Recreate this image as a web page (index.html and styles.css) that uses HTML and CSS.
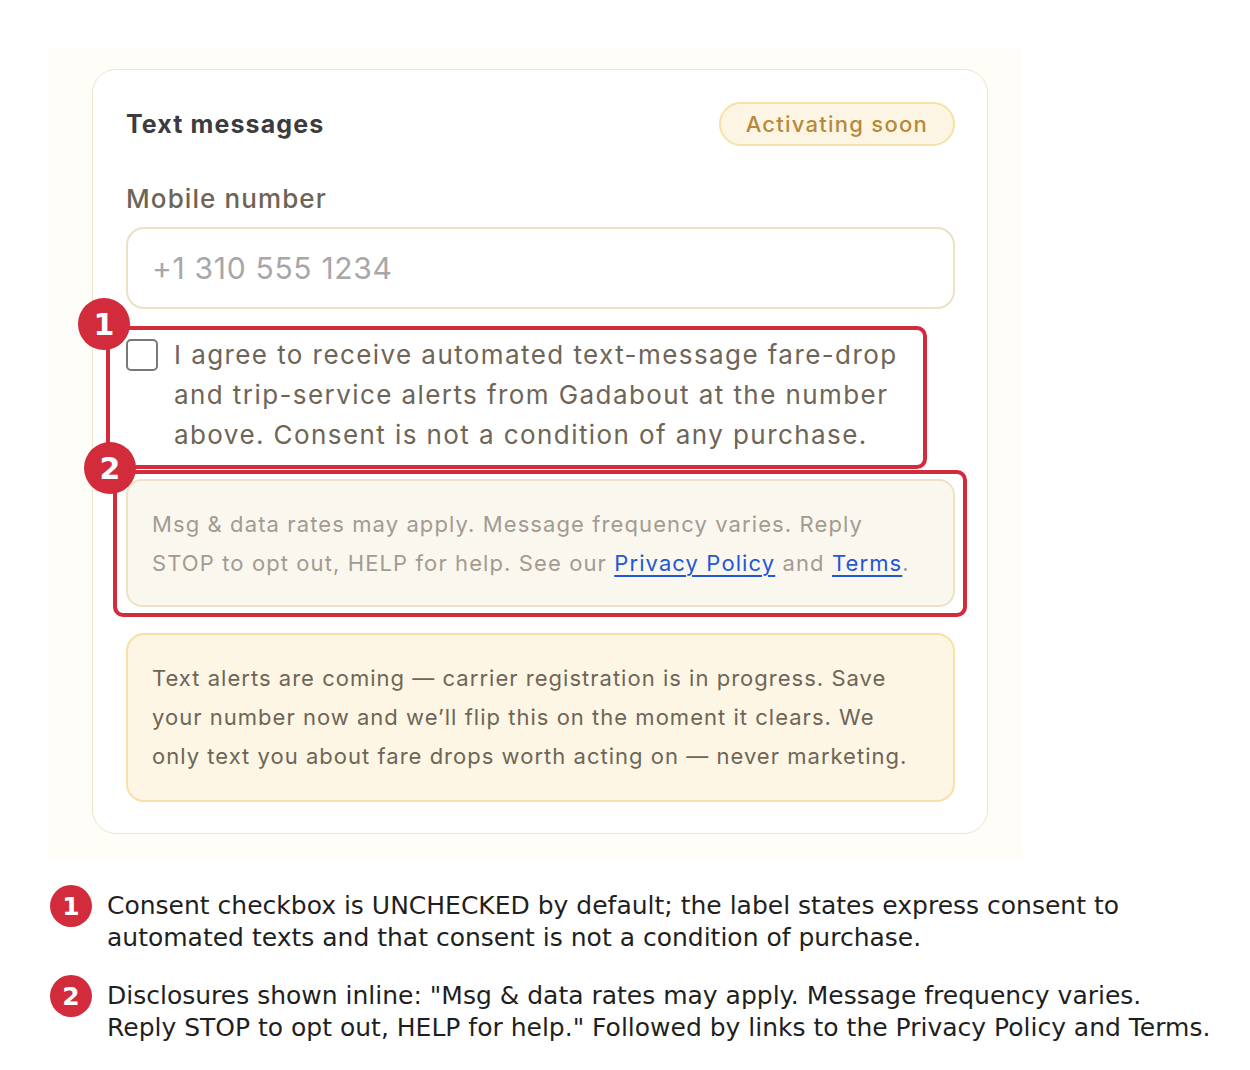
FILE: index.html
```html
<!DOCTYPE html>
<html lang="en">
<head>
<meta charset="utf-8">
<title>Text messages</title>
<link rel="stylesheet" href="styles.css">
</head>
<body>
<div class="stage">
  <div class="panel">
    <section class="card">
      <header class="card-head">
        <h2 class="title">Text messages</h2>
        <span class="badge">Activating soon</span>
      </header>
      <label class="field-label" for="phone">Mobile number</label>
      <input class="phone" id="phone" type="tel" placeholder="+1 310 555 1234">
      <div class="consent">
        <span class="checkbox"></span>
        <p class="consent-text">I agree to receive automated text-message fare-drop<br>and trip-service alerts from Gadabout at the number<br>above. Consent is not a condition of any purchase.</p>
      </div>
      <div class="disclosure">
        <p>Msg &amp; data rates may apply. Message frequency varies. Reply<br>STOP to opt out, HELP for help. See our <a href="#">Privacy Policy</a> and <a href="#">Terms</a>.</p>
      </div>
      <div class="notice">
        <p>Text alerts are coming — carrier registration is in progress. Save<br>your number now and we’ll flip this on the moment it clears. We<br>only text you about fare drops worth acting on — never marketing.</p>
      </div>
    </section>
  </div>

  <div class="mark mark-1"></div>
  <div class="mark mark-2"></div>
  <span class="pin pin-1">1</span>
  <span class="pin pin-2">2</span>
</div>

<ol class="notes">
  <li class="note"><span class="note-num">1</span><p>Consent checkbox is UNCHECKED by default; the label states express consent to<br>automated texts and that consent is not a condition of purchase.</p></li>
  <li class="note"><span class="note-num">2</span><p>Disclosures shown inline: "Msg &amp; data rates may apply. Message frequency varies.<br>Reply STOP to opt out, HELP for help." Followed by links to the Privacy Policy and Terms.</p></li>
</ol>
</body>
</html>
```

FILE: styles.css
```css
* { box-sizing: border-box; }

html, body {
  margin: 0;
  padding: 0;
  background: #ffffff;
}

body {
  font-family: Inter, "Noto Sans", sans-serif;
  color: #6e6557;
}

.stage {
  position: relative;
  padding: 48px 0 0 48px;
}

.panel {
  width: 974px;
  background: #fffdf8;
  padding: 21px 34px 25px 44px;
}

.card {
  width: 896px;
  background: #ffffff;
  border: 1px solid #efe5cf;
  border-radius: 24px;
  padding: 32px 32px 31px 33px;
}

.card-head {
  display: flex;
  justify-content: space-between;
  align-items: center;
  height: 44px;
}

.title {
  margin: 0;
  font-size: 25px;
  font-weight: 700;
  color: #3c3c3e;
  letter-spacing: 1.1px;
}

.badge {
  display: inline-flex;
  align-items: center;
  height: 44px;
  padding: 0 25px;
  border-radius: 22px;
  background: #fdf5e3;
  border: 2px solid #f7e1a6;
  color: #b6893b;
  font-size: 22px;
  font-weight: 500;
  letter-spacing: 1.25px;
}

.field-label {
  display: block;
  margin-top: 38px;
  font-size: 26px;
  line-height: 30px;
  font-weight: 500;
  color: #6e6456;
  letter-spacing: 1.1px;
}

.phone {
  display: block;
  width: 100%;
  height: 82px;
  margin-top: 13px;
  border: 2px solid #ede0c4;
  border-radius: 18px;
  background: #ffffff;
  padding: 0 24px;
  font-family: Inter, "Noto Sans", sans-serif;
  font-size: 30px;
  color: #6e6557;
  outline: none;
}

.phone::placeholder {
  color: #a7a7a9;
  letter-spacing: 0.7px;
}

.consent {
  display: flex;
  gap: 16px;
  margin-top: 26px;
}

.checkbox {
  flex: none;
  width: 32px;
  height: 32px;
  margin-top: 4px;
  border: 2px solid #7a7874;
  border-radius: 5px;
  background: #fff;
}

.consent-text {
  margin: 0;
  font-size: 26px;
  line-height: 40px;
  letter-spacing: 1.42px;
  color: #6e6557;
}

.disclosure {
  margin-top: 24px;
  background: #faf7ee;
  border: 2px solid #ede2c6;
  border-radius: 16px;
  padding: 24px 24px 22px;
}

.disclosure p {
  margin: 0;
  font-size: 22px;
  line-height: 39px;
  letter-spacing: 1.1px;
  color: #a39b92;
}

.disclosure a {
  color: #2357d8;
  text-decoration: underline;
  text-underline-offset: 4px;
  text-decoration-thickness: 2px;
}

.notice {
  margin-top: 26px;
  background: #fdf6e4;
  border: 2px solid #f8e1a6;
  border-radius: 18px;
  padding: 24px 24px;
}

.notice p {
  margin: 0;
  font-size: 22px;
  line-height: 39px;
  letter-spacing: 1.02px;
  color: #6e6557;
}

/* annotation overlays */
.mark {
  position: absolute;
  border: 4px solid #d22b3c;
  border-radius: 10px;
  pointer-events: none;
}

.mark-1 { left: 106px; top: 326px; width: 821px; height: 143px; }
.mark-2 { left: 113px; top: 470px; width: 854px; height: 147px; }

.pin {
  position: absolute;
  width: 52px;
  height: 52px;
  border-radius: 50%;
  background: #d22b3c;
  color: #ffffff;
  font-family: "DejaVu Sans", sans-serif;
  font-weight: 700;
  font-size: 30px;
  display: flex;
  align-items: center;
  justify-content: center;
}

.pin-1 { left: 78px; top: 298px; }
.pin-2 { left: 84px; top: 442px; }

.notes {
  list-style: none;
  margin: 31px 0 0 0;
  padding: 0 0 0 50px;
  font-family: "DejaVu Sans", sans-serif;
  color: #1f1f1f;
  display: flex;
  flex-direction: column;
  gap: 26px;
}

.note {
  display: flex;
  align-items: flex-start;
  gap: 15px;
}

.note-num {
  flex: none;
  width: 42px;
  height: 42px;
  margin-top: -5px;
  border-radius: 50%;
  background: #d22b3c;
  color: #fff;
  font-weight: 700;
  font-size: 25px;
  display: flex;
  align-items: center;
  justify-content: center;
}

.note p {
  margin: 0;
  font-size: 25px;
  line-height: 32px;
}
```
